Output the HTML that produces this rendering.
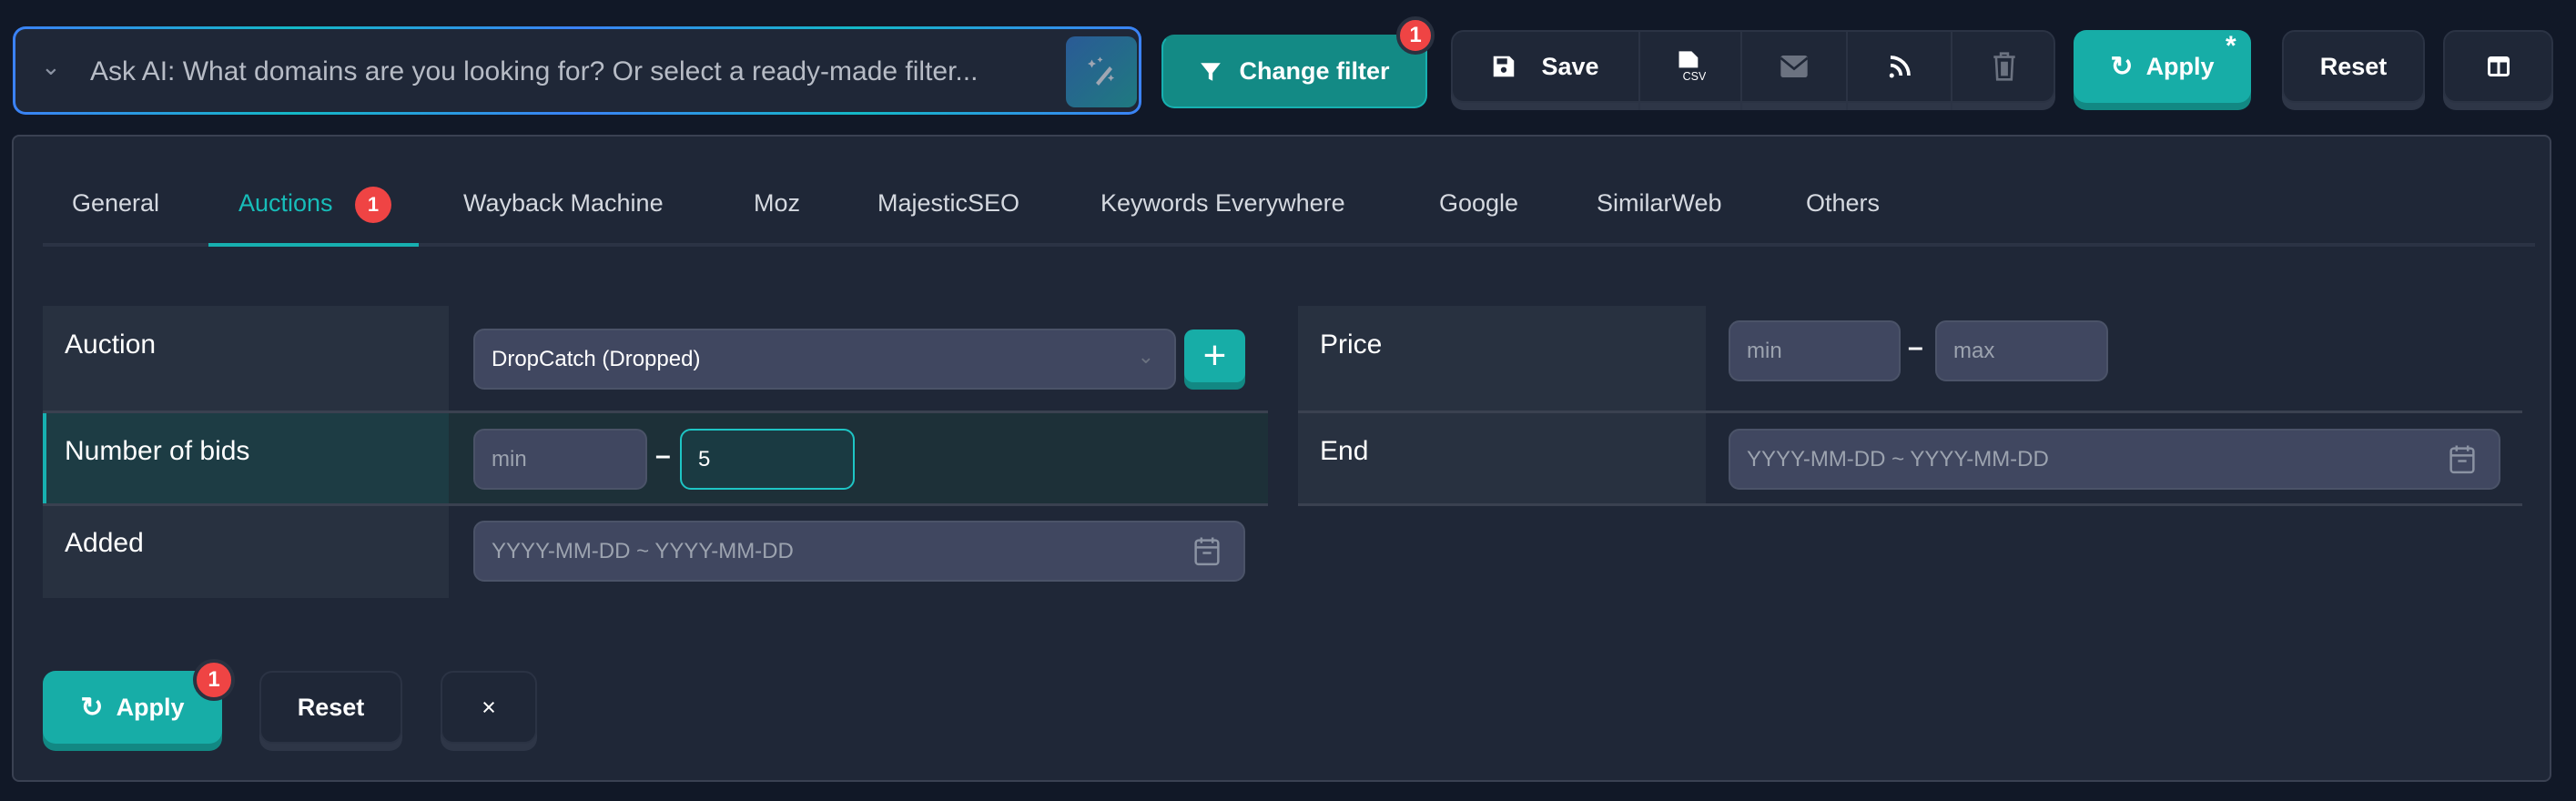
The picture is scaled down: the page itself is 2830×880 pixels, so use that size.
<!DOCTYPE html>
<html><head><meta charset="utf-8"><style>
*{box-sizing:border-box;margin:0;padding:0}
body{width:2830px;height:880px;background:#111827;font-family:"Liberation Sans",sans-serif;color:#fff;position:relative;overflow:hidden}
.a{position:absolute}
.fx{display:flex;align-items:center;justify-content:center}
.btn{position:absolute;border-radius:14px;display:flex;align-items:center;justify-content:center;font-size:27px;font-weight:bold;color:#fff}
.dk{background:#1f2737;border:2px solid #2b3344;box-shadow:0 8px 0 #2e3647}
.tl{background:#17ada7;box-shadow:0 8px 0 #128883}
.badge{position:absolute;width:42px;height:42px;border-radius:50%;background:#ef4444;border:4px solid #2a3140;color:#fff;font-size:24px;font-weight:bold;display:flex;align-items:center;justify-content:center}
.tab{position:absolute;top:208px;font-size:27px;color:#d5d9e0}
.lab{position:absolute;background:#283140;font-size:30px;color:#fff;padding:26px 0 0 24px}
.inp{position:absolute;background:#404760;border:2px solid #4b5368;border-radius:12px;font-size:24px;color:#9ca3af;display:flex;align-items:center;padding-left:18px}
.sep{position:absolute;height:3px;background:#3a4150}
</style></head><body>
<!-- AI input -->
<div class="a" style="left:14px;top:29px;width:1240px;height:97px;border-radius:14px;background:linear-gradient(90deg,#3b82f6,#14b8c6,#3b82f6,#14b8c6,#3b82f6);padding:3px">
<div style="width:100%;height:100%;background:#1f2737;border-radius:11px;position:relative">
<div class="a" style="left:28px;top:26px;font-size:26px;color:#8b93a3">&#8964;</div>
<div class="a" style="left:82px;top:30px;font-size:30px;color:#b7bcc6;white-space:nowrap">Ask AI: What domains are you looking for? Or select a ready-made filter...</div>
<div class="a fx" style="left:1154px;top:8px;width:78px;height:78px;border-radius:10px;background:linear-gradient(135deg,#2a5a96,#1f7a80)">
<svg width="36" height="36" viewBox="0 0 24 24" fill="#a0a6b2"><path d="M8 20l10-12 2 2-10 12z"/><path d="M5 3l1 2 2 1-2 1-1 2-1-2-2-1 2-1zM11 1l.7 1.3 1.3.7-1.3.7L11 5l-.7-1.3L9 3l1.3-.7zM19 14l.8 1.6 1.6.8-1.6.8-.8 1.6-.8-1.6-1.6-.8 1.6-.8z"/></svg></div>
</div></div>
<!-- change filter -->
<div class="btn" style="left:1276px;top:38px;width:292px;height:81px;background:#138a85;border:2px solid #17b0b0;border-top-color:#138a85">
<svg width="26" height="26" viewBox="0 0 24 24" fill="#fff" style="margin-right:18px"><path d="M2 3h20l-8 10v8l-4-2v-6z"/></svg>Change filter</div>
<div class="badge" style="left:1534px;top:18px">1</div>
<!-- group -->
<div class="a dk" style="left:1594px;top:33px;width:664px;height:80px;border-radius:14px"></div>
<div class="a" style="left:1800px;top:35px;width:2px;height:86px;background:#2b3344"></div>
<div class="a" style="left:1912px;top:35px;width:2px;height:86px;background:#2b3344"></div>
<div class="a" style="left:2028px;top:35px;width:2px;height:86px;background:#2b3344"></div>
<div class="a" style="left:2143px;top:35px;width:2px;height:86px;background:#2b3344"></div>
<div class="a fx" style="left:1594px;top:33px;width:206px;height:80px;font-size:27px;font-weight:bold">
<svg width="30" height="30" viewBox="0 0 24 24" fill="#fff" style="margin-right:26px"><path d="M3 3h14l4 4v14H3z"/><rect x="6" y="5" width="9" height="5" fill="#1f2737"/><circle cx="12" cy="15" r="2.5" fill="#1f2737"/></svg>Save</div>
<div class="a fx" style="left:1802px;top:33px;width:110px;height:80px">
<svg width="34" height="36" viewBox="0 0 24 26"><path d="M3 1h10l5 5v8H3z" fill="#fff"/><text x="6" y="24" font-size="9" fill="#fff" font-family="Liberation Sans">CSV</text></svg></div>
<div class="a fx" style="left:1914px;top:33px;width:114px;height:80px">
<svg width="32" height="28" viewBox="0 0 24 20"><rect x="1" y="1" width="22" height="18" rx="2" fill="#6b7280"/><path d="M1 3l11 9 11-9" stroke="#1f2737" stroke-width="2" fill="none"/></svg></div>
<div class="a fx" style="left:2030px;top:33px;width:113px;height:80px">
<svg width="30" height="30" viewBox="0 0 24 24" fill="none" stroke="#fff" stroke-width="3"><circle cx="5" cy="20" r="2" fill="#fff" stroke="none"/><path d="M4 11a9 9 0 0 1 9 9M4 4a16 16 0 0 1 16 16"/></svg></div>
<div class="a fx" style="left:2145px;top:33px;width:113px;height:80px">
<svg width="26" height="34" viewBox="0 0 20 26" fill="none" stroke="#6b7280" stroke-width="2"><path d="M1 5h18M7 5V2h6v3M3 5l1 19h12l1-19M8 9v12M10 9v12M12 9v12"/></svg></div>
<!-- apply -->
<div class="btn tl" style="left:2278px;top:33px;width:195px;height:80px"><span style="font-size:30px;margin-right:14px">&#x21bb;</span>Apply</div>
<div class="a" style="left:2445px;top:34px;font-size:30px;font-weight:bold">*</div>
<div class="btn dk" style="left:2507px;top:33px;width:157px;height:80px">Reset</div>
<div class="btn dk" style="left:2684px;top:33px;width:121px;height:80px">
<svg width="24" height="22" viewBox="0 0 24 22"><rect x="1.5" y="1.5" width="21" height="19" rx="2" fill="none" stroke="#fff" stroke-width="3"/><rect x="1.5" y="1.5" width="21" height="5" fill="#fff"/><path d="M12 2v18" stroke="#fff" stroke-width="3"/></svg></div>
<!-- panel -->
<div class="a" style="left:13px;top:148px;width:2790px;height:711px;background:#1f2737;border:2px solid #3a4152;border-radius:8px"></div>
<div class="a" style="left:47px;top:267px;width:2738px;height:4px;background:#2b3344"></div>
<div class="a" style="left:229px;top:267px;width:231px;height:4px;background:#17b0b0"></div>
<div class="tab" style="left:79px">General</div>
<div class="tab" style="left:262px;color:#17bdb9">Auctions</div>
<div class="badge" style="left:390px;top:205px;width:40px;height:40px;border:none;font-size:22px">1</div>
<div class="tab" style="left:509px">Wayback Machine</div>
<div class="tab" style="left:828px">Moz</div>
<div class="tab" style="left:964px">MajesticSEO</div>
<div class="tab" style="left:1209px">Keywords Everywhere</div>
<div class="tab" style="left:1581px">Google</div>
<div class="tab" style="left:1754px">SimilarWeb</div>
<div class="tab" style="left:1984px">Others</div>
<!-- left rows -->
<div class="lab" style="left:47px;top:336px;width:446px;height:117px">Auction</div>
<div class="a" style="left:47px;top:453px;width:1346px;height:101px;background:#1d3038"></div>
<div class="lab" style="left:47px;top:453px;width:446px;height:101px;background:#1d3c44;border-left:4px solid #17b0b0;padding-left:20px">Number of bids</div>
<div class="lab" style="left:47px;top:554px;width:446px;height:103px">Added</div>
<div class="sep" style="left:47px;top:451px;width:1346px"></div>
<div class="sep" style="left:47px;top:553px;width:1346px"></div>
<div class="inp" style="left:520px;top:361px;width:772px;height:67px;color:#fff">DropCatch (Dropped)<span style="position:absolute;right:22px;top:16px;color:#6b7280;font-size:22px">&#8964;</span></div>
<div class="btn tl" style="left:1301px;top:362px;width:67px;height:58px;border-radius:10px;font-size:44px;font-weight:normal">+</div>
<div class="inp" style="left:520px;top:471px;width:191px;height:67px">min</div>
<div class="a" style="left:720px;top:484px;font-size:30px;font-weight:bold">–</div>
<div class="inp" style="left:747px;top:471px;width:192px;height:67px;background:#1a3a42;border-color:#1ec5c5;color:#fff">5</div>
<div class="inp" style="left:520px;top:572px;width:848px;height:67px">YYYY-MM-DD ~ YYYY-MM-DD
<svg class="a" style="right:24px;top:15px" width="32" height="34" viewBox="0 0 20 22" fill="none" stroke="#8b93a3" stroke-width="1.6"><rect x="2" y="3" width="16" height="17" rx="2"/><path d="M6 1v4M14 1v4M2 8h16M7 12h6"/></svg></div>
<!-- right rows -->
<div class="lab" style="left:1426px;top:336px;width:448px;height:117px">Price</div>
<div class="lab" style="left:1426px;top:453px;width:448px;height:101px">End</div>
<div class="sep" style="left:1426px;top:451px;width:1345px"></div>
<div class="sep" style="left:1426px;top:553px;width:1345px"></div>
<div class="inp" style="left:1899px;top:352px;width:189px;height:67px">min</div>
<div class="a" style="left:2096px;top:365px;font-size:30px;font-weight:bold">–</div>
<div class="inp" style="left:2126px;top:352px;width:190px;height:67px">max</div>
<div class="inp" style="left:1899px;top:471px;width:848px;height:67px">YYYY-MM-DD ~ YYYY-MM-DD
<svg class="a" style="right:24px;top:15px" width="32" height="34" viewBox="0 0 20 22" fill="none" stroke="#8b93a3" stroke-width="1.6"><rect x="2" y="3" width="16" height="17" rx="2"/><path d="M6 1v4M14 1v4M2 8h16M7 12h6"/></svg></div>
<!-- bottom buttons -->
<div class="btn tl" style="left:47px;top:737px;width:197px;height:80px"><span style="font-size:30px;margin-right:14px">&#x21bb;</span>Apply</div>
<div class="badge" style="left:212px;top:724px;width:46px;height:46px">1</div>
<div class="btn dk" style="left:285px;top:737px;width:157px;height:80px">Reset</div>
<div class="btn dk" style="left:484px;top:737px;width:106px;height:80px;font-weight:normal">×</div>
</body></html>
